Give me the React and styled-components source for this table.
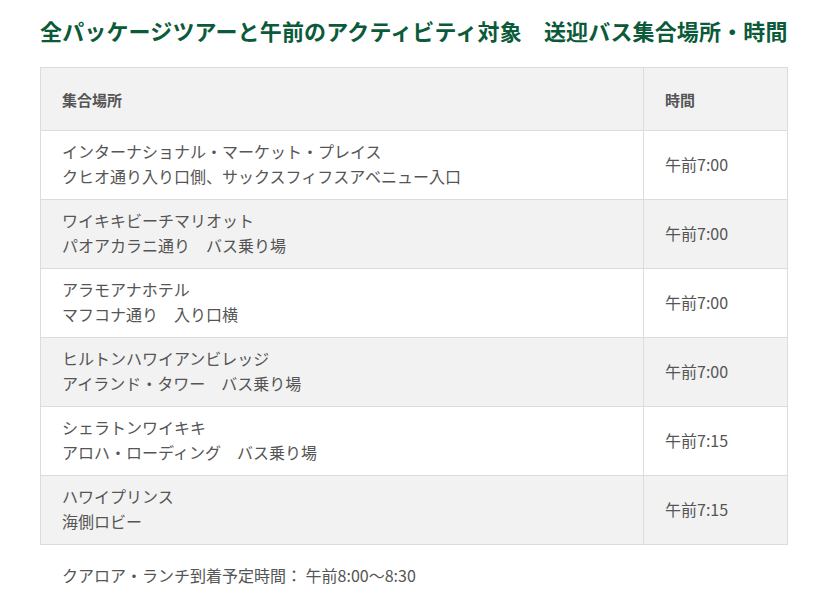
import React from 'react';
import styled, { createGlobalStyle } from 'styled-components';

// page base
const GlobalStyle = createGlobalStyle`
  body {
    margin: 0;
    background: #fff;
    font-family: "Noto Sans CJK JP", "Noto Sans", sans-serif;
    color: #555;
  }
`;

const Page = styled.div`
  width: 818px;
  padding: 12px 30px 0 40px;
  box-sizing: border-box;
`;

const Title = styled.h2`
  margin: 0 0 19px;
  font-size: 22px;
  line-height: 36px;
  font-weight: 700;
  letter-spacing: 0.15px;
  color: #0b5a3a;
  white-space: nowrap;
`;

const Table = styled.table`
  width: 748px;
  border-collapse: collapse;
  font-size: 16px;
  line-height: 25px;
`;

const Row = styled.tr`
  background: ${p => (p.$shaded ? '#f2f2f2' : '#fff')};
  height: ${p => p.$h || 69}px;
`;

const Head = styled.th`
  border: 1px solid #dcdcdc;
  padding: 0 21px;
  text-align: left;
  font-weight: 700;
  font-size: 15px;
  color: #555;
  width: ${p => p.$w || 'auto'};
`;

const Cell = styled.td`
  border: 1px solid #dcdcdc;
  padding: 8px 21px 10px;
  vertical-align: middle;
  color: #555;
`;

const Note = styled.p`
  margin: 18px 0 0 22px;
  font-size: 16px;
  line-height: 24px;
  color: #555;
`;

const stops = [
  ['インターナショナル・マーケット・プレイス', 'クヒオ通り入り口側、サックスフィフスアベニュー入口', '午前7:00'],
  ['ワイキキビーチマリオット', 'パオアカラニ通り　バス乗り場', '午前7:00'],
  ['アラモアナホテル', 'マフコナ通り　入り口横', '午前7:00'],
  ['ヒルトンハワイアンビレッジ', 'アイランド・タワー　バス乗り場', '午前7:00'],
  ['シェラトンワイキキ', 'アロハ・ローディング　バス乗り場', '午前7:15'],
  ['ハワイプリンス', '海側ロビー', '午前7:15'],
];

export default function App() {
  return (
    <Page>
      <GlobalStyle />
      <Title>全パッケージツアーと午前のアクティビティ対象　送迎バス集合場所・時間</Title>
      <Table>
        <thead>
          <Row $shaded $h={63}>
            <Head>集合場所</Head>
            <Head $w="101px">時間</Head>
          </Row>
        </thead>
        <tbody>
          {stops.map(([name, spot, time], i) => (
            <Row key={name} $shaded={i % 2 === 1}>
              <Cell>
                {name}
                <br />
                {spot}
              </Cell>
              <Cell>{time}</Cell>
            </Row>
          ))}
        </tbody>
      </Table>
      <Note>クアロア・ランチ到着予定時間： 午前8:00〜8:30</Note>
    </Page>
  );
}
